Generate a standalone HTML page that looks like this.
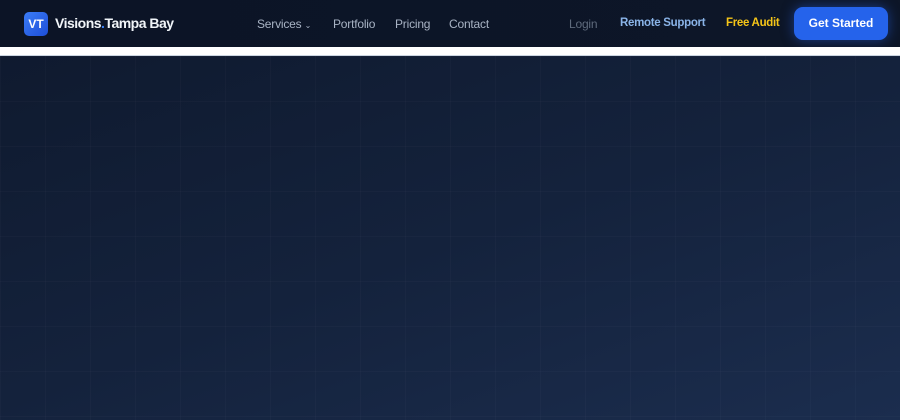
<!DOCTYPE html>
<html><head><style>
*{margin:0;padding:0;box-sizing:border-box}
body{width:900px;height:420px;overflow:hidden;background:#0f172a;font-family:"Liberation Sans",sans-serif}
nav{position:absolute;left:0;top:0;width:900px;height:47px;background:linear-gradient(90deg,#0c1426,#0d1628);}
.logo{position:absolute;left:24px;top:12px;width:24px;height:24px;border-radius:5px;background:linear-gradient(135deg,#3b7cf6,#1d4ed8);color:#fff;font-weight:bold;font-size:12px;line-height:24px;text-align:center}
.brand{position:absolute;left:55px;top:15px;color:#f1f5f9;font-weight:bold;font-size:14px;letter-spacing:-0.5px}
.brand b{color:#3b82f6}
.n{position:absolute;top:17px;font-size:12px;color:#a8b3c4;letter-spacing:-0.2px}
.btn{position:absolute;left:794px;top:7px;width:94px;height:33px;border-radius:9px;background:#2563eb;color:#fff;font-size:12px;font-weight:bold;line-height:33px;text-align:center;box-shadow:0 0 12px rgba(37,99,235,.5)}
.strip{position:absolute;top:47px;left:0;width:900px;height:9px;background:#fff;border-bottom:1px solid #cbd5e1}
.hero{position:absolute;top:56px;left:0;width:900px;height:364px;background:linear-gradient(160deg,#0f1a2f 0%,#14223c 50%,#1b2d4e 100%)}
.grid{position:absolute;inset:0;background-image:linear-gradient(90deg,rgba(255,255,255,.018) 1px,transparent 1px),linear-gradient(rgba(255,255,255,.018) 1px,transparent 1px);background-size:45px 45px}
</style></head><body>
<nav>
<div class="logo">VT</div>
<div class="brand">Visions<b>.</b>Tampa Bay</div>
<div class="n" style="left:257px">Services <span style="font-size:8px">&#8964;</span></div>
<div class="n" style="left:333px">Portfolio</div>
<div class="n" style="left:395px">Pricing</div>
<div class="n" style="left:449px">Contact</div>
<div class="n" style="left:569px;color:#5f6b7d">Login</div>
<div class="n" style="left:620px;color:#8ab4e8;font-weight:bold;font-size:11.5px;letter-spacing:-0.3px">Remote Support</div>
<div class="n" style="left:726px;color:#f5c518;font-weight:bold;font-size:11.5px;letter-spacing:-0.3px">Free Audit</div>
<div class="btn">Get Started</div>
</nav>
<div class="strip"></div>
<div class="hero"><div class="grid"></div></div>
</body></html>
